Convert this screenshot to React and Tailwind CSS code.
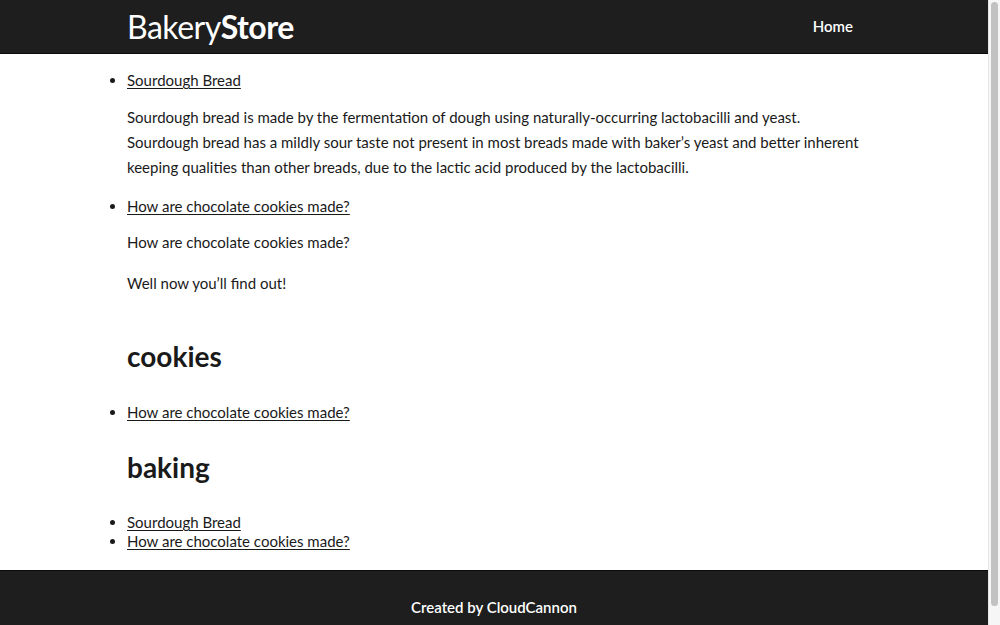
import React from "react";

const Bullet = ({ children }) => (
  <li>
    <a href="#" className="underline underline-offset-2 decoration-1">
      {children}
    </a>
  </li>
);

const App = () => {
  return (
    <div className="h-[625px] overflow-hidden flex bg-white text-[#1a1a1a] font-['Source_Sans_Pro',Lato,sans-serif] text-[15px]">
      <div className="w-[988px] shrink-0 flex flex-col">
        {/* Header */}
        <header className="h-[54px] shrink-0 bg-[#1e1e1e] border-b border-[#0a0a0a]">
          <div className="w-[734px] mx-auto h-full flex items-center justify-between">
            <a href="#" className="text-white text-[32px] leading-none tracking-[-0.5px]">
              Bakery<span className="font-bold">Store</span>
            </a>
            <a href="#" className="text-white text-[15px] font-semibold pr-[8px]">
              Home
            </a>
          </div>
        </header>

        {/* Main */}
        <main className="w-[734px] mx-auto pt-[16px] pb-[19px]">
          <ul className="list-disc leading-[20px]">
            <Bullet>Sourdough Bread</Bullet>
            <div className="mt-[15px] mb-[16px] leading-[25px]">
              Sourdough bread is made by the fermentation of dough using naturally-occurring lactobacilli and yeast.
              Sourdough bread has a mildly sour taste not present in most breads made with baker’s yeast and better
              inherent keeping qualities than other breads, due to the lactic acid produced by the lactobacilli.
            </div>
            <Bullet>How are chocolate cookies made?</Bullet>
            <div className="mt-[14px] flex flex-col gap-[16px] leading-[25px]">
              <p>How are chocolate cookies made?</p>
              <p>Well now you’ll find out!</p>
            </div>
          </ul>

          <h2 className="mt-[43px] text-[28px] font-bold leading-[34px]">cookies</h2>
          <ul className="list-disc mt-[29px] leading-[20px]">
            <Bullet>How are chocolate cookies made?</Bullet>
          </ul>

          <h2 className="mt-[28px] text-[28px] font-bold leading-[34px]">baking</h2>
          <ul className="list-disc mt-[29px] leading-[19px]">
            <Bullet>Sourdough Bread</Bullet>
            <Bullet>How are chocolate cookies made?</Bullet>
          </ul>
        </main>

        {/* Footer */}
        <footer className="shrink-0 h-[75px] bg-[#1e1e1e] border-t border-[#0a0a0a] flex justify-center pt-[26px]">
          <span className="text-white font-semibold leading-[20px]">Created by CloudCannon</span>
        </footer>
      </div>

      {/* Scrollbar */}
      <div className="w-[12px] shrink-0 bg-[#f6f6f6] border-l border-[#e6e6e6] pt-[2px] pl-[2px]">
        <div className="w-[7px] h-[604px] rounded-full bg-[#c2c2c2]" />
      </div>
    </div>
  );
};

export default App;
